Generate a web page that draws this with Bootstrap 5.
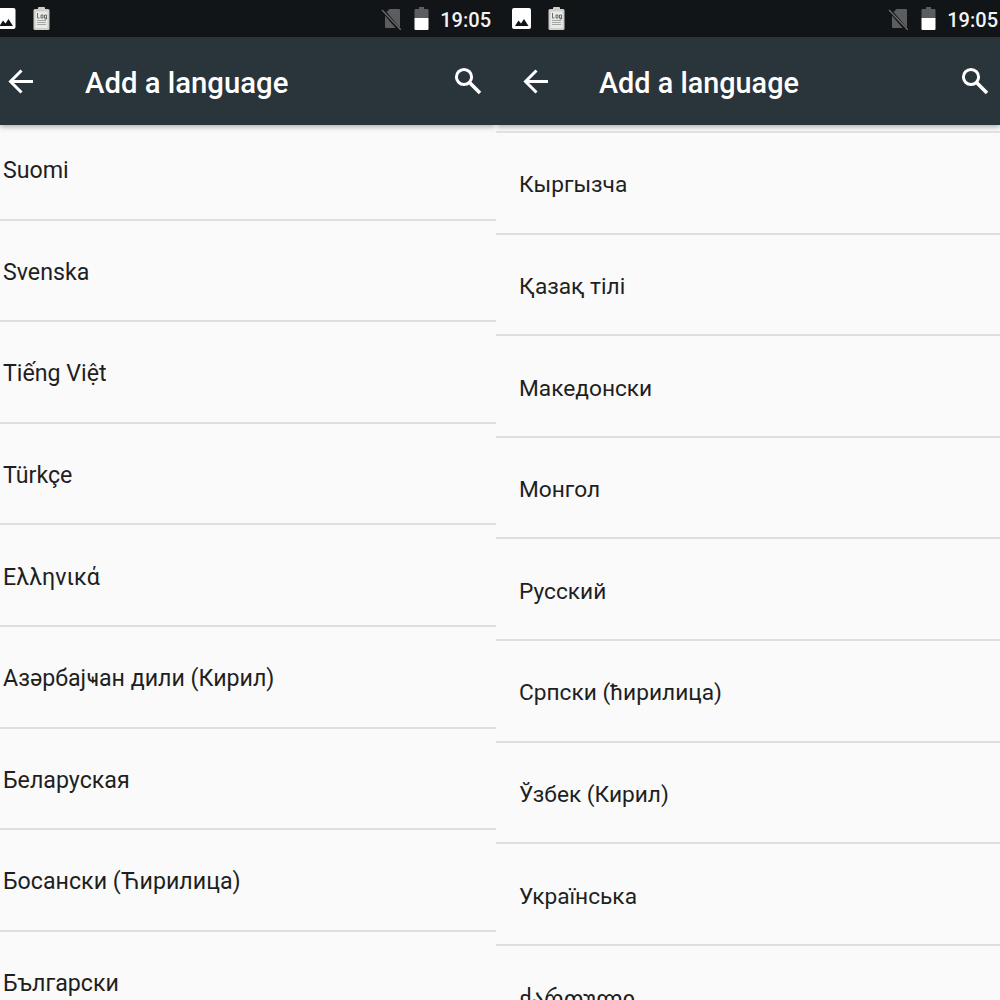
<!doctype html>
<html lang="en">
<head>
<meta charset="utf-8">
<title>Add a language</title>
<link rel="stylesheet" href="https://cdn.jsdelivr.net/npm/bootstrap@5.3.0/dist/css/bootstrap.min.css">
<style>
html,body{height:1000px;overflow:hidden;background:#fafafa;margin:0}
body{font-family:Roboto,"Noto Sans","DejaVu Sans",sans-serif}
.phone-l{width:496px}
.phone-r{width:504px}
.phone{height:1000px;overflow:hidden;background:#fafafa}
.statusbar{height:37px;background:#121518;color:#fff;flex:none}
.statusbar .clock{font-size:20px;font-weight:500;line-height:1;color:#f4f4f4;margin-left:11px;margin-top:3px}
.statusbar .sim{margin-right:13px}
.statusbar .clip{margin-left:17px}
.phone-l .statusbar{padding-right:5px}
.phone-r .statusbar{padding-left:16px;padding-right:2px}
.appbar{height:88px;background:#29343b;color:#fff;flex:none;box-shadow:0 2px 5px rgba(0,0,0,.3);position:relative;z-index:2}
.appbar h1{font-weight:500;margin:4px 0 0;line-height:1;color:#fff}
.phone-l .appbar h1{font-size:29.300px;margin-top:6px}
.phone-r .appbar h1{font-size:28.800px}
.phone-l .appbar{padding-left:8px;padding-right:14px}
.phone-r .appbar{padding-left:27px;padding-right:11px}
.phone-l .back{margin-right:50px}
.phone-r .back{margin-right:49px}
.lang-list{margin:0;padding:0;list-style:none}
.phone-l .lang-list{margin-top:-6px}
.phone-r .lang-list{padding-top:6px}
.phone-r .lang-list::before{content:"";display:block;border-top:2px solid #e3e3e3}
.lang-row{height:101.6px;border-bottom:2px solid #dedede;color:#1f1f1f;line-height:1;display:flex;align-items:center}
.phone-l .lang-row{padding-left:3px;padding-top:4px;font-size:23.200px}
.phone-r .lang-row{padding-left:23px;padding-top:6px;font-size:22.700px}
.georgian{font-size:24.600px;margin-top:3px}
</style>
</head>
<body>
<svg class="d-none"><defs>
  <symbol id="ic-clip" viewBox="0 0 17 23"><rect x=".5" y="2" width="16" height="21" rx="1.500" fill="#cfcfca"/><rect x="5" y="0" width="7" height="4" rx="1" fill="#cfcfca"/><rect x="2.500" y="4.500" width="12" height="16.500" fill="#e9e9e5"/><path d="M4.500 6v5h2M8 8h2v3H8zM11.500 8h2v4h-2M11.500 8v3h2" stroke="#5a5c5e" stroke-width=".9" fill="none"/><path d="M4 13.500h9M4 15.500h9M4 17.500h9" stroke="#a4a6a6" stroke-width="1" fill="none"/></symbol>
  <symbol id="ic-sim" viewBox="0 0 20 23"><path d="M8.500 2H18a1 1 0 0 1 1 1v17a1 1 0 0 1-1 1H5a1 1 0 0 1-1-1V6.500z" fill="#5b5d5f"/><path d="M1 2.500L19.500 24" stroke="#121518" stroke-width="3.500"/><path d="M1 3l19 20" stroke="#6a6c6e" stroke-width="1.300"/></symbol>
  <symbol id="ic-batt" viewBox="0 0 15 23"><path d="M5 0h5v2h3.500a1 1 0 0 1 1 1v8H.5V3a1 1 0 0 1 1-1H5z" fill="#5b5d5f"/><path d="M.5 11h14v11a1 1 0 0 1-1 1h-12a1 1 0 0 1-1-1z" fill="#fff"/></symbol>
  <symbol id="ic-back" viewBox="0 0 27 27"><path d="M25 13.500H3.500M13.500 2.500L2.500 13.500l11 11" fill="none" stroke="#fff" stroke-width="3"/></symbol>
  <symbol id="ic-search" viewBox="0 0 28 28"><circle cx="10" cy="10" r="7.600" fill="none" stroke="#fff" stroke-width="3"/><path d="M15.500 15.500L26 26" stroke="#fff" stroke-width="3.500"/></symbol>
</defs></svg>
<div class="d-flex">
  <section class="phone phone-l d-flex flex-column">
    <div class="statusbar d-flex align-items-center">
      <svg width="16" height="21" viewBox="3.500 0 16 21"><rect width="19" height="21" rx="2" fill="#fff"/><path d="M3 18l3.500-5.500 2.500 3 3-4.500 4.500 7z" fill="#121518"/></svg>
      <svg class="clip" width="17" height="23"><use href="#ic-clip"/></svg>
      <svg class="sim ms-auto" width="20" height="23"><use href="#ic-sim"/></svg>
      <svg width="15" height="23"><use href="#ic-batt"/></svg>
      <span class="clock">19:05</span>
    </div>
    <header class="appbar d-flex align-items-center">
      <svg class="back" width="27" height="27"><use href="#ic-back"/></svg>
      <h1>Add a language</h1>
      <svg class="ms-auto" width="28" height="28"><use href="#ic-search"/></svg>
    </header>
    <ul class="lang-list">
      <li class="lang-row">Suomi</li>
      <li class="lang-row">Svenska</li>
      <li class="lang-row">Tiếng Việt</li>
      <li class="lang-row">Türkçe</li>
      <li class="lang-row">Ελληνικά</li>
      <li class="lang-row">Азәрбајҹан дили (Кирил)</li>
      <li class="lang-row">Беларуская</li>
      <li class="lang-row">Босански (Ћирилица)</li>
      <li class="lang-row">Български</li>
    </ul>
  </section>
  <section class="phone phone-r d-flex flex-column">
    <div class="statusbar d-flex align-items-center">
      <svg width="19" height="21" viewBox="0 0 19 21"><rect width="19" height="21" rx="2" fill="#fff"/><path d="M3 18l3.500-5.500 2.500 3 3-4.500 4.500 7z" fill="#121518"/></svg>
      <svg class="clip" width="17" height="23"><use href="#ic-clip"/></svg>
      <svg class="sim ms-auto" width="20" height="23"><use href="#ic-sim"/></svg>
      <svg width="15" height="23"><use href="#ic-batt"/></svg>
      <span class="clock">19:05</span>
    </div>
    <header class="appbar d-flex align-items-center">
      <svg class="back" width="27" height="27"><use href="#ic-back"/></svg>
      <h1>Add a language</h1>
      <svg class="ms-auto" width="28" height="28"><use href="#ic-search"/></svg>
    </header>
    <ul class="lang-list">
      <li class="lang-row">Кыргызча</li>
      <li class="lang-row">Қазақ тілі</li>
      <li class="lang-row">Македонски</li>
      <li class="lang-row">Монгол</li>
      <li class="lang-row">Русский</li>
      <li class="lang-row">Српски (ћирилица)</li>
      <li class="lang-row">Ўзбек (Кирил)</li>
      <li class="lang-row">Українська</li>
      <li class="lang-row"><span class="georgian">ქართული</span></li>
    </ul>
  </section>
</div>
<script src="https://cdn.jsdelivr.net/npm/bootstrap@5.3.0/dist/js/bootstrap.bundle.min.js"></script>
</body>
</html>
